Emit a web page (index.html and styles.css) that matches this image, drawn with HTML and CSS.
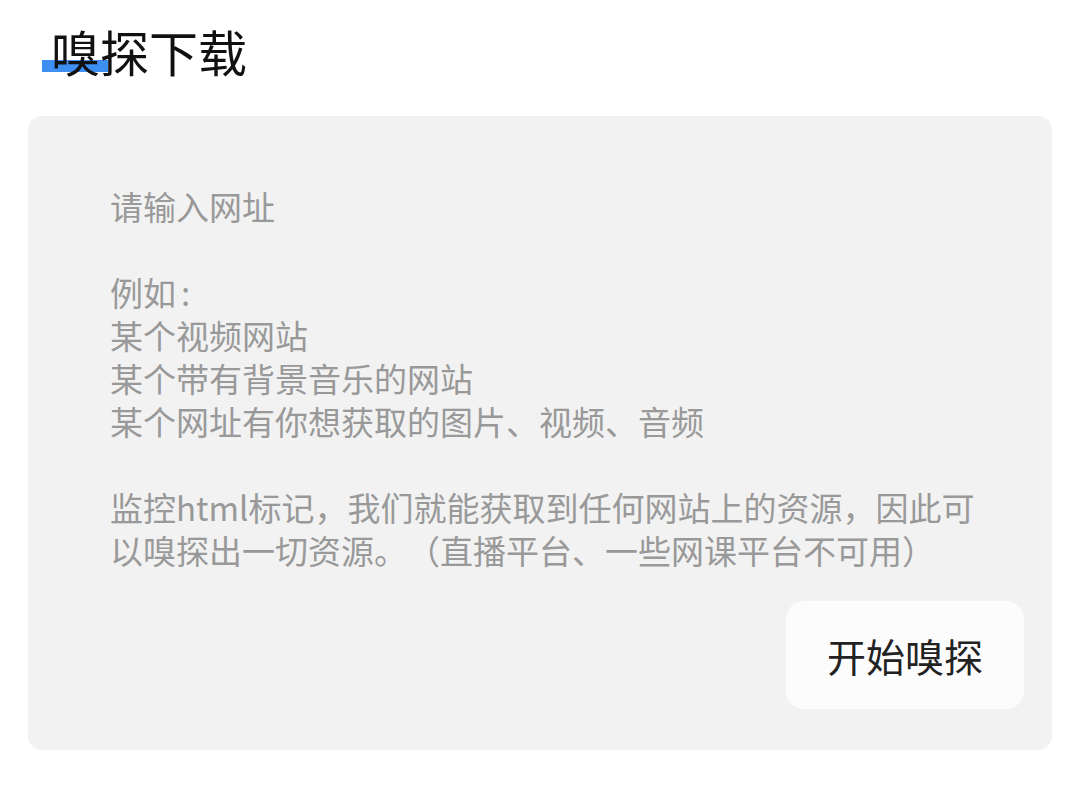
FILE: index.html
```html
<!DOCTYPE html>
<html lang="zh-CN">
<head>
<meta charset="utf-8">
<link rel="stylesheet" href="styles.css">
</head>
<body>
<header class="title-bar">
  <h1 class="title"><span class="title-text">嗅探下载</span></h1>
</header>
<main class="card">
  <div class="hint">请输入网址<br><br>例如<span class="colon">:</span><br>某个视频网站<br>某个带有背景音乐的网站<br>某个网址有你想获取的图片、视频、音频<br><br>监控html标记，我们就能获取到任何网站上的资源，因此可<br>以嗅探出一切资源。（直播平台、一些网课平台不可用）</div>
  <div class="actions">
    <button class="start-btn">开始嗅探</button>
  </div>
</main>
</body>
</html>
```
FILE: styles.css
```css
* { box-sizing: border-box; }
html, body {
  margin: 0;
  padding: 0;
  background: #ffffff;
  font-family: "Noto Sans CJK SC", "Noto Sans", sans-serif;
  text-spacing-trim: space-all;
}
.title-bar {
  height: 116px;
  padding: 16px 0 0 51px;
}
.title {
  margin: 0;
  font-size: 49px;
  font-weight: 400;
  line-height: 70px;
  color: #111111;
  position: relative;
  display: inline-block;
}
.title::before {
  content: "";
  position: absolute;
  left: -9px;
  top: 44px;
  width: 66px;
  height: 12px;
  background: #3d8ff2;
  z-index: 0;
}
.title-text {
  position: relative;
  z-index: 1;
}
.card {
  margin: 0 28px;
  background: #f2f2f2;
  border-radius: 14px;
  padding: 69px 28px 40px 82px;
  height: 634px;
}
.hint {
  font-size: 33px;
  line-height: 43px;
  color: #999999;
  white-space: nowrap;
  text-spacing-trim: space-all;
}
.colon {
  margin-left: 5px;
}
.actions {
  display: flex;
  justify-content: flex-end;
  margin-top: 29px;
}
.start-btn {
  width: 238px;
  height: 108px;
  border: none;
  border-radius: 18px;
  background: #fcfcfc;
  font-family: "Noto Sans CJK SC", "Noto Sans", sans-serif;
  font-size: 39px;
  color: #222222;
  padding: 0;
}
```
